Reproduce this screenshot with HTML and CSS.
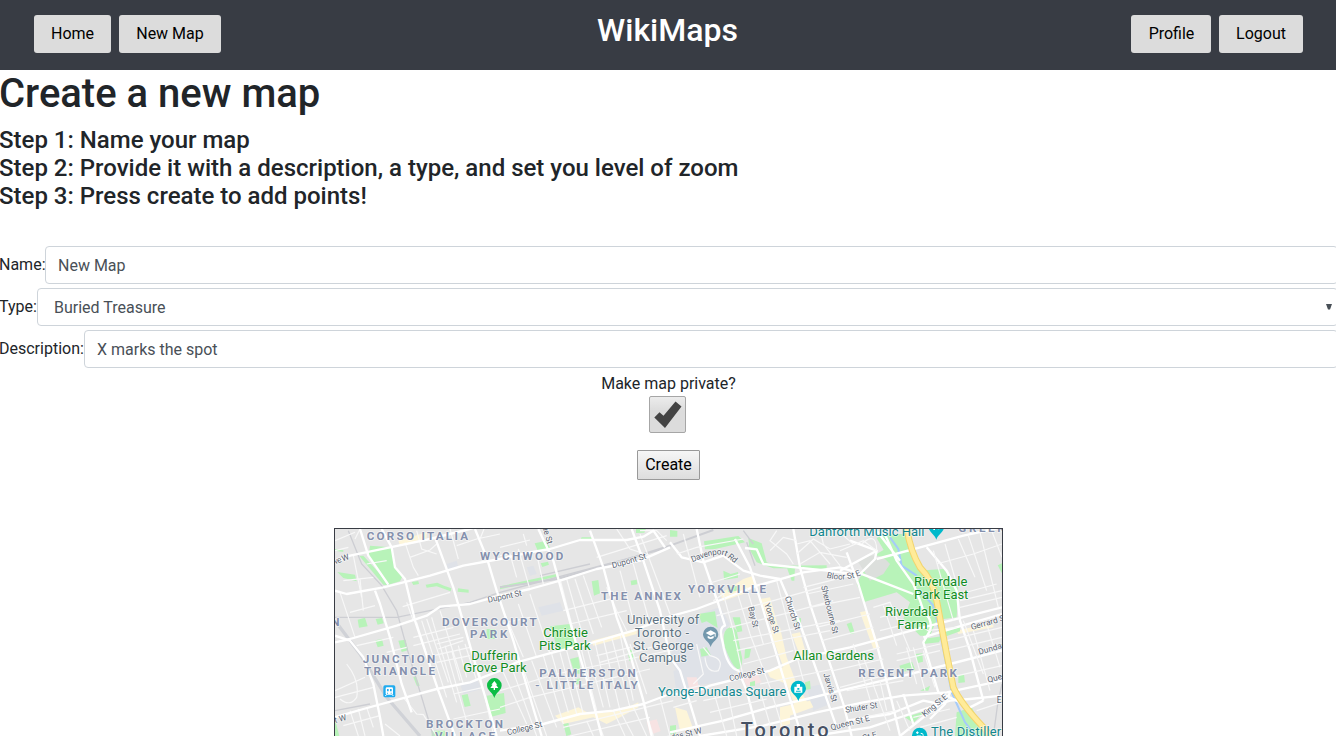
FILE: index.html
```html
<!DOCTYPE html>
<html lang="en">
<head>
<meta charset="utf-8">
<title>WikiMaps</title>
<link rel="stylesheet" href="styles.css">
</head>
<body>
<header class="navbar">
  <nav class="nav-group"><a class="nav-btn home">Home</a><a class="nav-btn newmap">New Map</a></nav>
  <h2 class="brand">WikiMaps</h2>
  <nav class="nav-group right"><a class="nav-btn profile">Profile</a><a class="nav-btn logout">Logout</a></nav>
</header>
<main>
  <h1 class="title">Create a new map</h1>
  <div class="steps">
    <h4>Step 1: Name your map</h4>
    <h4>Step 2: Provide it with a description, a type, and set you level of zoom</h4>
    <h4>Step 3: Press create to add points!</h4>
  </div>
  <form class="form">
    <div class="row"><label class="l-name">Name:</label><input class="control" type="text" value="New Map"></div>
    <div class="row"><label class="l-type">Type:</label><div class="control select"><span>Buried Treasure</span><svg width="6" height="6" viewBox="0 0 6 6"><path d="M0 0h6L4 5.5H2z" fill="#495057"/></svg></div></div>
    <div class="row"><label class="l-desc">Description:</label><input class="control" type="text" value="X marks the spot"></div>
    <div class="private">Make map private?</div>
    <div class="check"><svg width="35" height="35" viewBox="0 0 35 35"><path d="M4.300 20.500L9.500 15.200L13.500 18.800L25.500 4.500L31.500 9.500L15 31z" fill="#444"/></svg></div>
    <button class="create" type="button">Create</button>
  </form>
  <div class="map">
  <svg class="map-svg" width="667" height="207" viewBox="15 15 2001 621">
    <rect width="2030" height="650" fill="#e6e6e6"/>
    <g class="campus">
      <path d="M1060 285L1170 250L1200 300L1170 340L1220 440L1200 470L1130 480L1060 490L1020 400z"/>
      <path d="M1030 440L1080 430L1100 500L1040 510z"/><path d="M390 480L440 465L455 495L400 510z"/>
      <path d="M625 250L690 235L700 260L635 275z"/><path d="M1430 490L1480 480L1500 540L1450 560z"/>
      <path d="M350 120L380 110L385 130L355 138zM590 130L610 125L620 150L600 155z"/>
    </g>
    <g class="pink"><path d="M1070 460h30l8 35h-30zM1235 455l45-10 15 30-45 12zM950 593l30-7 12 35-32 12z"/></g>
    <g class="cream">
      <path d="M1240 165L1270 155L1280 180L1240 210L1180 230L1170 210zM1290 225L1320 220L1345 310L1330 320zM1320 320L1350 310L1370 400L1400 480L1435 540L1400 560L1370 480L1320 460L1310 440L1360 430zM1385 330L1410 325L1430 395L1412 400z"/>
      <path d="M785 350L920 315V330L790 365zM675 575L745 550L780 570L870 560L925 535V550L870 580L830 600L790 580L700 600zM1035 550L1070 560L1090 615L1050 620zM1350 550L1440 530L1450 550L1380 575V600L1350 610zM1590 265l20-5 38 110-18 4zM205 50L290 25V42L210 65zM1880 320L1990 295V310L1885 330z"/>
    </g>
    <g class="park">
      <path d="M115 100L120 65L185 70L195 125L218 155L210 172L175 182z"/><path d="M88 96L100 95L150 150L172 184L160 182z"/>
      <path d="M22 144L75 152L80 172L40 162zM15 75l25 3v6l-25-4zM245 174l20-3 2 9-17 3zM287 182l35-6 20 9 22 8-2 9-42-15-30 4zM384 193l32 4v9l-33-3zM83 287l22-6 8 26-26 4zM137 285l19-3 5 16-18 4zM136 349l20-4 5 20-18 5zM205 350l22-3 7 32-19 5zM250 460l8-3 11 28-8 2zM395 514l18-4 9 35-18 4zM470 315h25v30h-25zM305 620h40v16h-40zM15 585l13 51H15zM470 515l52-8 5 60-45 12z"/>
      <path d="M510 187L680 150V158L510 196zM614 58L650 50L660 72L625 85zM632 118l22-5 3 9-20 7zM755 40h30v6l-35 2zM918 15l30-1-5 12-25 1zM785 172l20-4 5 40-18 7zM902 170l18-3 2 14-18 3zM660 307L720 300L738 365L685 380zM720 405l25-6 9 50h-20zM740 465l10-2-3 18-10-1zM893 380l12-4 7 28-14 7zM700 600l15-3 9 34-15 5z"/>
      <path d="M1020 18l22 3v17h-22zM1122 52L1225 36L1245 55L1155 75L1125 76zM1255 42L1295 58L1310 115L1340 125L1490 124V134L1330 133L1280 115L1258 75zM1370 130h25l-2 40h-8zM1180 140l22 10 22-6v17l-42 6zM1192 190l30-5v15l-28 5zM1105 270l50-8 8 50-33-20-15 5zM1208 280h22l7 42-15 3zM1110 375l20-5 12 22-28 6zM1245 375h18l-5 25-15 5zM1260 475l15-5v15l-15 1zM1425 475l15-5 2 25-16 3zM1398 285l15-3v15l-13 2zM1020 605l18-2v28h-18z"/>
      <path d="M1190 315Q1208 303 1220 320L1237 405Q1235 438 1222 436Q1205 425 1185 370Q1175 330 1190 315z"/>
      <path d="M1600 140L1640 90L1690 60L1730 70L1760 140L1840 135L1885 190L1880 280L1820 288L1800 335L1770 335L1720 285L1740 235L1700 205L1603 234L1580 180z"/>
      <path d="M1640 42L1665 30h75l30 110 20 65-60-15-50-80zM1840 325l50-15v12l-45 16zM1780 345l55-8-8 18-48 5zM1708 425l38-12 10 25-40 5zM1755 390l22-2 2 25-16 4zM1885 455l17-4 3 24-20 2zM1770 500l30-15-5 15zM1725 580l60-18-35 35zM1880 565l45-15 45 86h-95zM1550 300l14-5 10 32-12 4zM2003 124l13-6v30z"/>
    </g>
    <path class="land" d="M1585 115Q1640 70 1680 120L1660 150L1620 170z"/>
    <g class="water"><path d="M1680 40l25 35 10 50 45 30M1765 195l45 50 20 80 35 180 40 90 35 45"/></g>
    <g class="rail">
      <path d="M55 20L95 120L155 185L200 260L230 370L310 636M15 280L200 280L420 235L510 205L1020 70M630 155L780 120M1250 55l25 70M1240 20l30 40"/>
      <path class="wide" d="M15 290L90 390L170 520L270 636"/>
      <path class="mid" d="M510 190L680 165L860 115L1020 65L1150 18"/>
      <path d="M15 560L120 540M2016 480L2003 540L1990 636"/>
    </g>
    <g class="minor">
      <path d="M15 50L75 25M15 80L55 70M90 15L75 45M40 170L130 160M70 95L95 220M90 165L100 260M30 205L75 340M60 265L135 245M110 120L170 110M240 100L300 78L320 60M225 55L250 130L265 155M260 20L275 75L320 90M360 15L385 105M380 65L440 45L510 30M218 248L360 205M230 235L250 290M450 45L462 15"/>
      <path d="M260 295L310 455M275 290L350 520M290 285L355 475M305 280L380 535M330 260L400 480M250 340L370 310M250 365L390 330M320 360L400 340M325 375L400 350M310 395L420 370M320 415L420 395M345 365L415 610M365 380L390 470M385 365L410 460M405 360L440 470M15 520L130 490M15 500L105 460M50 420Q90 470 80 520Q60 550 30 525M80 365L190 340M170 385L230 370M220 520L260 570L280 572L320 636M165 600L210 636M60 560L85 636M85 555L105 636M110 550L130 610M40 605L150 575M370 510L460 490M445 430L490 630M370 585L510 555"/>
      <path d="M510 95L540 90L560 160M580 30L590 65M510 70L600 48M565 75L598 190M690 165L730 320M710 165L760 340M735 165L790 330M760 155L815 310M510 300L600 280M520 260L580 400M565 240L620 400M600 210L660 390M700 260L860 220M720 300L890 260M830 190L860 260L890 320M870 140L910 290M910 120L960 300M930 30L1020 270M860 15L900 75L960 95M800 100L1010 35M620 90L640 180M930 20L980 20L1010 50"/>
      <path d="M510 500L680 450L1040 375M510 550L600 520L960 435M520 445L590 600M545 430L620 636M575 420L650 636M605 410L680 610M640 395L700 600M665 390L715 565M690 385L740 570M710 380L760 570M750 360L800 560M770 365L820 550M795 355L840 550M820 345L870 560M845 340L900 550M870 330L910 530M900 360L950 510M800 395L900 370M810 415L980 365M700 610L1030 530M720 636L960 580M770 590L790 636M800 580L820 636M850 560L885 636M870 560L910 636M910 550L950 636M940 540L970 636M990 520L1020 636"/>
    </g>
    <g class="street">
      <path d="M15 115L60 95L180 70L300 45L430 12"/><path d="M15 200L50 210L160 190L220 175L300 155L400 125L510 105L600 85L660 75L750 48L890 48L940 38L970 20L1005 70"/>
      <path d="M15 355L60 345L200 305L290 275L330 248L420 240L510 215L600 195L690 170L800 135L930 110L1020 70"/>
      <path d="M15 580L100 555L320 495L420 475L510 440L560 415L670 385L790 355L910 320L1020 277L1100 255L1180 225L1280 185L1370 160L1420 145L1530 130L1600 152L1660 175L1750 210"/>
      <path d="M510 620L640 600L750 570L850 560L940 540L1020 510L1080 510L1140 485L1220 465L1320 440L1400 405L1560 370L1780 310L2016 250"/>
      <path d="M1020 625L1180 590L1320 550L1430 525L1530 500L1700 460L1860 420L2016 380M1110 636L1300 605L1460 565L1600 535L1720 515L1850 505L2016 470M1450 636L1620 610L1740 570L1860 530L1920 525L2016 515"/>
      <path d="M15 335L60 350L100 400L130 480L150 580L160 636M90 15L115 95L175 182M155 15L185 70L195 130L225 165L255 290L325 500L375 636M135 200L150 240L180 340L215 480L245 565M315 40L370 190L430 400L490 600L500 636M435 15L470 100L500 200L550 350L615 570L635 636M625 15L670 110L730 330L780 500L815 636M780 20L820 130L860 280L900 390L940 530L965 636"/>
      <path d="M905 15L940 110L990 260L1020 400L1050 440L1110 636M1020 55L1055 100L1120 115L1180 95L1240 140L1290 155L1350 165L1365 200L1410 300L1460 440L1520 610M1100 15L1120 110L1165 240L1185 305Q1165 310 1178 355Q1190 430 1225 440L1250 500L1285 636"/>
      <path d="M1215 45L1260 130L1290 225L1360 460L1415 636M1245 72L1280 76L1300 120L1490 140L1580 152M1390 15L1410 130L1440 240L1480 360L1540 540L1565 636M1550 85L1585 180L1640 360L1685 530L1710 636M1640 80L1530 140M1560 50L1640 80L1635 105L1590 150M1640 105L1790 65L1900 35L2016 10"/>
      <path d="M1660 20L1700 110L1750 180L1770 230L1780 260Q1810 290 1800 320L1780 355L1825 505M1790 70L1850 140L1880 200L1890 290L1920 380L1960 530M1640 20L1710 110M1550 590L1680 570L1780 530L1830 540L1710 636M1720 510L1750 600M1860 505L1845 540L1800 585M1780 340L1845 320L2016 270M1825 505L1880 530L1920 550L1960 530"/>
    </g>
    <g class="minor">
      <path d="M1040 90L1100 70L1240 45M1060 30L1110 220M1130 180L1230 150M1150 230L1180 210L1210 320L1240 460M1220 200L1260 330L1320 490M1250 190L1300 360M1340 170L1380 320L1420 470M1160 275L1330 230L1490 185M1200 310L1380 265L1510 230M1210 350L1490 295L1530 290M1220 380L1370 345L1500 320M1240 420L1390 380M1290 480L1510 435M1050 500L1110 485M1120 530L1290 495M1140 565L1310 525M1150 500L1190 636M1190 490L1220 636M1100 360L1120 450L1090 480M1120 370L1140 395Q1185 405 1165 440Q1130 450 1125 400M1030 550L1100 530M1290 500L1330 636M1320 490L1360 620M1340 20L1320 50L1370 90L1390 120M1320 80L1360 40L1400 50M1400 60L1440 50L1500 120M1400 90L1450 45L1500 75L1560 60M1410 120L1470 85L1550 100M1470 15L1480 60L1530 125M1420 190L1560 155M1430 210L1570 180M1440 250L1590 220M1460 310L1620 270M1475 350L1630 310M1500 410L1650 370M1510 440L1660 405M1530 490L1680 450"/>
      <path d="M1530 80L1600 50L1640 80M1540 35L1570 60M1595 60Q1640 20 1640 80M1630 250L1680 235L1740 380M1660 245L1700 365M1650 280L1720 260M1650 320L1750 295M1730 370L1760 480M1750 370L1785 500M1780 380L1815 490M1700 390L1830 360M1700 410L1830 380M1790 320L1880 310M1810 80L1870 290M1845 60L1880 180M1885 45L1935 160M1915 35L1970 200M1950 25L2005 250M1985 20L2016 100M1820 120L1930 90L2016 60M1890 210L2000 180M1890 230L2016 200M1890 250L2016 220M1900 290L1960 450M1930 320L1980 500M1970 300L2010 430M1850 350L2016 310M1850 380L2016 340M1860 460L2016 425M1600 400L1680 620M1570 360L1630 560M1600 580L1700 560M1550 500L1720 470M1650 470L1670 560M1700 530L1740 620M1750 580L1860 555M1770 610L1880 580M1940 560L2016 535"/>
    </g>
    <path class="hw-edge" d="M1730 10Q1740 80 1770 130Q1810 170 1820 230L1850 390L1870 490Q1890 535 1960 610L1985 640"/>
    <path class="hw" d="M1730 10Q1740 80 1770 130Q1810 170 1820 230L1850 390L1870 490Q1890 535 1960 610L1985 640"/>
    <g class="road-label">
      <text transform="translate(15 121) rotate(-20)" textLength="47">ve W</text><text transform="translate(15 597) rotate(-15)">t W</text>
      <text transform="translate(475 236) rotate(-12)" textLength="104">Dupont St</text><text transform="translate(848 133) rotate(-16)" textLength="106">Dupont St</text>
      <text transform="translate(637 8) rotate(74)">ue St</text>
      <path id="dav" d="M1087 115Q1165 80 1190 98L1240 140" fill="none" stroke="none"/><text textLength="139"><textPath href="#dav">Davenport Rd</textPath></text>
      <path id="blo" d="M1489 160Q1545 178 1605 148" fill="none" stroke="none"/><text textLength="107"><textPath href="#blo">Bloor St E</textPath></text>
      <text transform="translate(1254 250) rotate(76)" textLength="64">Bay St</text><text transform="translate(1303 240) rotate(72)" textLength="94">Yonge St</text>
      <text transform="translate(1364 220) rotate(72)" textLength="104">Church St</text><text transform="translate(1473 187) rotate(76)" textLength="148">Sherbourne St</text>
      <text transform="translate(1480 450) rotate(73)" textLength="90">Jarvis St</text><text transform="translate(1200 472) rotate(-14)" textLength="108">College St</text>
      <text transform="translate(533 634) rotate(-14)" textLength="108">College St</text><text transform="translate(983 658) rotate(-13)" textLength="137">Dundas St W</text>
      <text transform="translate(1925 318) rotate(-16)">Gerrard St E</text><text transform="translate(1948 392) rotate(-16)">Dundas St E</text>
      <text transform="translate(1975 476) rotate(-15)">Queen St E</text><text transform="translate(2000 537)">Eastern</text>
      <text transform="translate(1784 580) rotate(-40)" textLength="92">King St E</text><text transform="translate(1547 566) rotate(-9)" textLength="97">Shuter St</text>
      <text transform="translate(1504 619) rotate(-14)" textLength="120">Queen St E</text><text transform="translate(1600 650) rotate(-14)">St E</text>
    </g>
    <g class="district">
      <text x="110" y="48" textLength="304">CORSO ITALIA</text><text x="450" y="108" textLength="250">WYCHWOOD</text>
      <text x="813" y="228" textLength="240">THE ANNEX</text><text x="1074" y="207" textLength="234">YORKVILLE</text>
      <text x="336" y="306" textLength="284">DOVERCOURT</text><text x="420" y="342" textLength="112">PARK</text><text x="4" y="306">N</text>
      <text x="98" y="417" textLength="218">JUNCTION</text><text x="102" y="453" textLength="213">TRIANGLE</text>
      <text x="628" y="459" textLength="289">PALMERSTON</text><text x="615" y="495" textLength="308">- LITTLE ITALY</text>
      <text x="288" y="612" textLength="231">BROCKTON</text><text x="315" y="648" textLength="180">VILLAGE</text>
      <text x="1585" y="459" textLength="296">REGENT PARK</text><text x="1885" y="24" textLength="139">GREEK</text>
    </g>
    <g class="place green">
      <text x="640" y="338" textLength="134">Christie</text><text x="627" y="377" textLength="155">Pits Park</text>
      <text x="424" y="407" textLength="139">Dufferin</text><text x="400" y="445" textLength="190">Grove Park</text>
      <text x="1752" y="187" textLength="160">Riverdale</text><text x="1752" y="226" textLength="163">Park East</text>
      <text x="1665" y="277" textLength="160">Riverdale</text><text x="1702" y="316" textLength="90">Farm</text><text x="1390" y="407" textLength="242">Allan Gardens</text>
    </g>
    <g class="place slate"><text x="891" y="299" textLength="217">University of</text><text x="914" y="338" textLength="163">Toronto -</text><text x="909" y="377" textLength="182">St. George</text><text x="927" y="415" textLength="144">Campus</text></g>
    <g class="place teal"><text x="984" y="517" textLength="385">Yonge-Dundas Square</text><text x="1438" y="36" textLength="345">Danforth Music Hall</text><text x="1803" y="636" textLength="230">The Distillery</text></g>
    <text class="city" x="1232" y="638" textLength="264">Toronto</text>
    <g transform="translate(178 502)"><rect x="-18" y="-18" width="36" height="36" rx="5" fill="#20acef"/><rect x="-11" y="-12" width="22" height="22" rx="4" fill="#fff"/><path d="M-7-7h5v7h-5zM2-7h5v7H2z" fill="#20acef"/><path d="M-8 9l-4 5M8 9l4 5" stroke="#fff" stroke-width="3"/><path d="M-7 4h3v3h-3zM4 4h3v3H4z" fill="#20acef"/></g>
    <g transform="translate(493 485)"><path class="pin" fill="#0cbd45" d="M0 37C-5 20-22 15-22-1A22 22 0 0 1 22-1C22 15 5 20 0 37z"/><path d="M0-14L9-3H5L12 7H2v6h-4V7h-10L-5-3h-4z" fill="#fff"/></g>
    <g transform="translate(1142 332)"><path class="pin" fill="#7398ad" d="M0 37C-5 20-23 15-23-1A23 23 0 0 1 23-1C23 15 5 20 0 37z"/><path d="M-15-5L0-13L15-5V6h-3V-3L0 3zM-9 3L0 8L9 3v7Q0 16-9 10z" fill="#fff"/></g>
    <g transform="translate(1405 494)"><path class="pin" fill="#00b9cb" d="M0 37C-5 20-23 15-23-1A23 23 0 0 1 23-1C23 15 5 20 0 37z"/><path d="M-12-6h24V12h-24zM-5-6V-14H5v8z" fill="#fff"/><path d="M-3-2h6v5h-6zM-7 6h14v3H-7z" fill="#00b9cb"/></g>
    <g transform="translate(1819 10)"><path class="pin" fill="#00b9cb" d="M0 37C-5 20-23 15-23-1A23 23 0 0 1 23-1C23 15 5 20 0 37z"/><path d="M-9-2h5v10h-5zM4-6h5V6H4z" fill="#fff"/></g>
    <g transform="translate(1769 634)"><circle r="23" fill="#00b9cb"/><path d="M-11-8h8M-7-12v8M3-6Q14-6 9 6M-9 2h14v8" stroke="#fff" stroke-width="3" fill="none"/></g>
  </svg>
  </div>
</main>
</body>
</html>
```
FILE: styles.css
```css
* { box-sizing: border-box; }
body { margin: 0; height: 736px; overflow: hidden; background: #fff; color: #212529; font: 16px/24px Roboto, sans-serif; }
h1, h2, h4 { margin: 0; font-weight: 500; }
.navbar { height: 70px; padding: 15px 33px 0 34px; background: #383c44; display: grid; grid-template-columns: 1fr auto 1fr; align-items: start; }
.nav-group { display: flex; gap: 8px; }
.right { justify-content: flex-end; }
.nav-btn { height: 38px; line-height: 38px; border-radius: 3px; background: #dcdcdc; color: #000; text-align: center; }
.home { width: 77px; }
.newmap { width: 102px; }
.profile { width: 80px; padding-left: 1px; }
.logout { width: 84px; }
.brand { color: #fff; font-size: 32px; line-height: 38px; margin: -4px 1px 0 -1px; }
.title { font-size: 40px; line-height: 48px; margin: 0 0 8px -1px; }
.steps h4 { font-size: 24px; line-height: 28px; margin-left: -1px; white-space: nowrap; }
.form { margin-top: 36px; display: flex; flex-direction: column; align-items: center; }
.row { display: flex; align-items: center; width: calc(100% + 2px); margin-right: -2px; margin-bottom: 4px; }
.row label { flex: none; margin-left: -1px; }
.l-name { width: 46px; }
.l-type { width: 38px; }
.l-desc { width: 85px; }
.control { flex: 1; min-width: 0; height: 38px; padding: 6px 12px; border: 1px solid #ced4da; border-radius: 4px; background: #fff; color: #495057; font: 16px/24px Roboto, sans-serif; }
.select { display: flex; justify-content: space-between; align-items: center; padding: 7px 5px 5px 16px; }
.select svg { margin-bottom: 2px; }
.private { height: 24px; padding-left: 1px; }
.check { width: 37px; height: 37px; margin-right: 2px; border: 1px solid #a6a6a6; border-radius: 2px; background: linear-gradient(#ececec, #dcdcdc 40%); }
.check svg { display: block; }
.create { width: 63px; height: 30px; margin-top: 17px; padding: 0 0 0 1px; border: 1px solid #999; border-radius: 1px; background: linear-gradient(#f6f6f6, #dddddd); color: #000; font: 16px/24px Roboto, sans-serif; }
.map { width: 669px; height: 208px; margin: 48px auto 0 334px; border: 1px solid #383c44; border-bottom: 0; overflow: hidden; }
.map-svg { display: block; }
.campus { fill: #dfe2e8; }
.pink { fill: #f7e3e3; }
.cream { fill: #fdf5d9; }
.park { fill: #b8f3b9; }
.land { fill: #dcdfdc; }
.water { fill: none; stroke: #a5cbfa; stroke-width: 6; }
.rail { fill: none; stroke: #cdced3; stroke-width: 4; }
.rail .wide { stroke: #d0d2d7; stroke-width: 10; }
.rail .mid { stroke-width: 6; }
.street { fill: none; stroke: #fff; stroke-width: 7; stroke-linejoin: round; }
.minor { fill: none; stroke: #f8f8f8; stroke-width: 3.5; }
.hw-edge { fill: none; stroke: #f3d56d; stroke-width: 20; }
.hw { fill: none; stroke: #ffeb99; stroke-width: 14; }
.map text { font-family: Roboto, sans-serif; paint-order: stroke; stroke: rgba(255, 255, 255, .6); stroke-width: 5px; stroke-linejoin: round; }
.road-label text { font-size: 25px; fill: #596372; }
.district text { font-size: 35px; font-weight: 700; fill: #8490ad; }
.place text { font-size: 39px; }
.green { fill: #118c24; }
.slate { fill: #5d7382; }
.teal { fill: #12878f; }
.map .city { font-size: 60px; font-weight: 500; fill: #465164; }
```
